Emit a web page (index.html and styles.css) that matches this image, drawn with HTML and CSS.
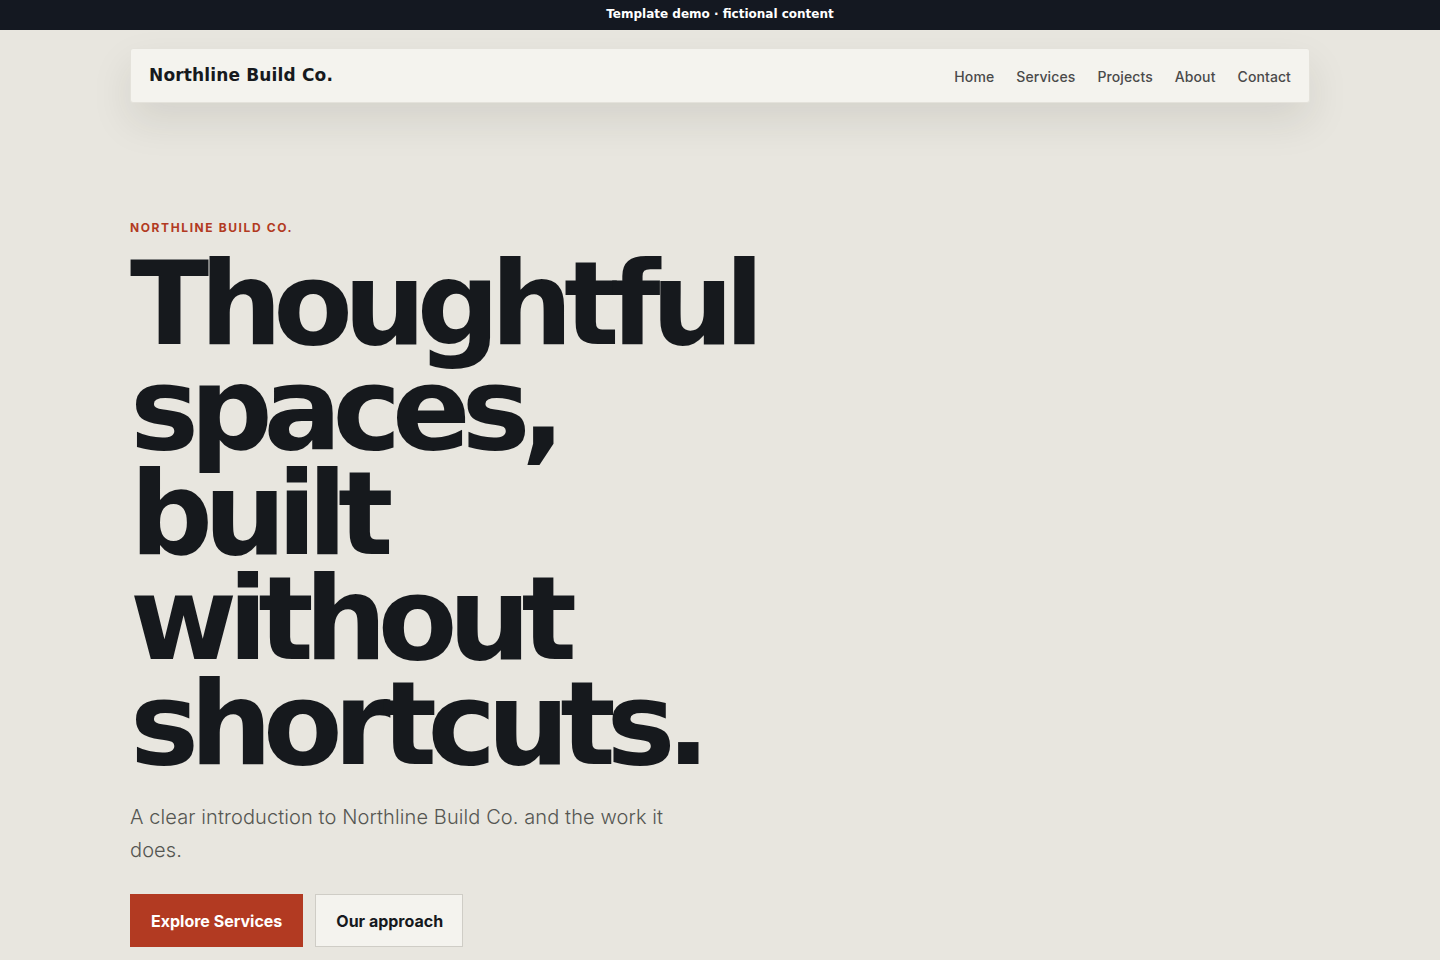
FILE: index.html
```html
<!DOCTYPE html>
<html lang="en">
<head>
<meta charset="utf-8">
<title>Northline Build Co.</title>
<link rel="stylesheet" href="styles.css">
</head>
<body>
<div class="topbar">Template demo · fictional content</div>
<div class="wrap">
  <header class="nav">
    <div class="brand">Northline Build Co.</div>
    <nav class="links">
      <a href="#">Home</a>
      <a href="#">Services</a>
      <a href="#">Projects</a>
      <a href="#">About</a>
      <a href="#">Contact</a>
    </nav>
  </header>
  <section class="hero">
    <div class="eyebrow">NORTHLINE BUILD CO.</div>
    <h1 class="title">Thoughtful spaces, built without shortcuts.</h1>
    <p class="lead">A clear introduction to Northline Build Co. and the work it does.</p>
    <div class="actions">
      <a class="btn primary" href="#">Explore Services</a>
      <a class="btn secondary" href="#">Our approach</a>
    </div>
  </section>
</div>
</body>
</html>
```
FILE: styles.css
```css
* { box-sizing: border-box; }
html, body { margin: 0; padding: 0; }
body {
  background: #e8e6df;
  color: #16191d;
  font-family: "Inter", "DejaVu Sans", sans-serif;
  height: 960px;
  overflow: hidden;
}
.topbar {
  height: 30px;
  background: #141821;
  color: #ffffff;
  font-family: "DejaVu Sans", sans-serif;
  font-weight: bold;
  font-size: 12px;
  display: flex;
  align-items: center;
  justify-content: center;
  padding-bottom: 2px;
}
.wrap {
  width: 1180px;
  margin: 0 auto;
  padding-top: 18px;
}
.nav {
  height: 55px;
  background: #f4f3ee;
  border: 1px solid #e4e2db;
  border-radius: 3px;
  box-shadow: 0 18px 40px rgba(40, 35, 25, 0.10);
  display: flex;
  align-items: center;
  justify-content: space-between;
  padding: 0 18px 0 18px;
}
.brand {
  font-family: "DejaVu Sans", sans-serif;
  font-weight: bold;
  font-size: 17px;
  letter-spacing: 0.15px;
  color: #16191d;
  margin-top: -2px;
}
.links {
  display: flex;
  gap: 22px;
  margin-top: 2px;
}
.links a {
  font-family: "Inter", sans-serif;
  font-weight: 500;
  font-size: 14px;
  letter-spacing: 0.1px;
  color: #4a4a4a;
  text-decoration: none;
}
.hero {
  padding-top: 117px;
}
.eyebrow {
  font-family: "Inter", sans-serif;
  font-weight: 700;
  font-size: 12px;
  letter-spacing: 1.6px;
  color: #b23a22;
}
.title {
  font-family: "DejaVu Sans", sans-serif;
  font-weight: bold;
  font-size: 116px;
  line-height: 105px;
  letter-spacing: -0.08em;
  margin: 16px 0 0 0;
  width: 700px;
  color: #16191d;
}
.lead {
  font-family: "Inter", sans-serif;
  font-weight: 300;
  font-size: 20px;
  line-height: 33px;
  letter-spacing: 0.1px;
  color: #555652;
  width: 560px;
  margin: 25px 0 0 0;
}
.actions {
  display: flex;
  gap: 12px;
  margin-top: 27px;
}
.btn {
  height: 53px;
  display: flex;
  align-items: center;
  padding: 0 21px;
  font-family: "Inter", sans-serif;
  font-weight: 700;
  font-size: 16px;
  text-decoration: none;
}
.btn.primary {
  background: #b23a22;
  color: #ffffff;
}
.btn.secondary {
  background: #f4f3ee;
  color: #16191d;
  border: 1px solid #cfcdc6;
  padding: 0 19px 0 20px;
}
```
